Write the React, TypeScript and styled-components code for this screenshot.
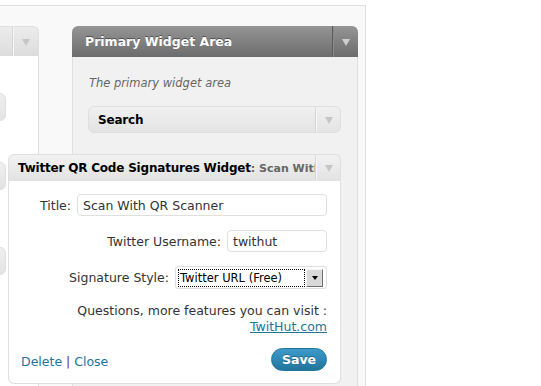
import React from 'react';
import styled, { createGlobalStyle } from 'styled-components';

const GlobalStyle = createGlobalStyle`
  * { box-sizing: border-box; }
  html, body {
    margin: 0;
    padding: 0;
    background: #fff;
  }
  body {
    font-family: 'DejaVu Sans', Verdana, sans-serif;
    font-size: 12.5px;
    color: #333;
    overflow: hidden;
  }
`;

const Frame = styled.div`
  display: flex;
  width: 366px;
  height: 381px;
  margin-top: 5px;
  padding-top: 20px;
  background: #f9f9f9;
  border-top: 1px solid #dfdfdf;
  border-right: 1px solid #dfdfdf;
  overflow: hidden;
`;

/* available widgets column, mostly scrolled off to the left */
const WidgetsPanel = styled.div`
  width: 39px;
  display: flex;
  flex-direction: column;
`;

const PanelHead = styled.div`
  height: 30px;
  display: flex;
  justify-content: flex-end;
  background: linear-gradient(#ececec, #dcdcdc);
  border-top: 1px solid #dfdfdf;
  border-right: 1px solid #dfdfdf;
  border-top-right-radius: 6px;
`;

const PanelBody = styled.div`
  flex: 1;
  background: #fff;
  border-right: 1px solid #dfdfdf;
  padding-top: 37px;
`;

interface StubProps {
  readonly top: number;
}

const Stub = styled.div<StubProps>`
  width: 20px;
  height: 28px;
  margin-left: -14px;
  margin-top: ${({ top }) => top}px;
  border: 1px solid #dfdfdf;
  border-radius: 6px;
  background: linear-gradient(#efefef, #e3e3e3);
`;

interface ToggleProps {
  readonly dark?: boolean;
  readonly w: number;
}

const Toggle = styled.div<ToggleProps>`
  width: ${({ w }) => w}px;
  flex: none;
  display: flex;
  align-items: center;
  justify-content: center;
  border-left: 1px solid ${({ dark }) => (dark ? '#5c5c5c' : '#f6f6f6')};
  box-shadow: ${({ dark }) => (dark ? 'inset 1px 0 0 #8a8a8a' : '-1px 0 0 #d6d6d6')};
  &::after {
    content: '';
    width: 0;
    height: 0;
    border-left: 4px solid transparent;
    border-right: 4px solid transparent;
    border-top: 7px solid ${({ dark }) => (dark ? '#cfcfcf' : '#c6c6c6')};
    margin-top: 1px;
  }
`;

const Sidebar = styled.div`
  width: 286px;
  margin-left: 33px;
  display: flex;
  flex-direction: column;
`;

const SidebarHead = styled.div`
  height: 31px;
  display: flex;
  align-items: stretch;
  background: linear-gradient(#959595, #6c6c6c);
  border-radius: 6px 6px 0 0;
  color: #fff;
`;

const SidebarTitle = styled.div`
  flex: 1;
  display: flex;
  align-items: center;
  padding-left: 13px;
  font-weight: bold;
  font-size: 12.5px;
  text-shadow: 0 -1px 0 #505050;
`;

const SidebarBody = styled.div`
  flex: 1;
  background: #f1f1f1;
  border-left: 1px solid #dfdfdf;
  border-right: 1px solid #dfdfdf;
  padding: 0 16px 0 15px;
`;

const Description = styled.p`
  margin: 18px 0 15px 1px;
  line-height: 16px;
  font-size: 11.5px;
  font-style: italic;
  color: #666;
`;

const SearchWidget = styled.div`
  height: 27px;
  display: flex;
  border: 1px solid #dfdfdf;
  border-radius: 6px;
  background: linear-gradient(#f0f0f0, #e4e4e4);
`;

const WidgetTitle = styled.div`
  flex: 1;
  display: flex;
  align-items: center;
  padding-left: 9px;
  font-weight: bold;
  font-size: 12px;
  letter-spacing: -0.2px;
  color: #000;
  white-space: nowrap;
  overflow: hidden;
`;

const InTitle = styled.span`
  color: #666;
  font-size: 11px;
  letter-spacing: 0;
`;

const OpenWidget = styled.div`
  margin: 21px 0 0 -80px;
`;

const OpenHead = styled.div`
  height: 27px;
  display: flex;
  background: linear-gradient(#f2f2f2, #e2e2e2);
  border: 1px solid #dfdfdf;
  border-bottom: none;
  border-radius: 6px 6px 0 0;
`;

const OpenBody = styled.div`
  background: #fff;
  border: 1px solid #dfdfdf;
  border-top: none;
  border-radius: 0 0 6px 6px;
  padding: 13px 13px 12px 12px;
`;

const FormRow = styled.div`
  display: flex;
  justify-content: flex-end;
  align-items: center;
  gap: 6px;
  margin-bottom: 14px;
`;

const Label = styled.span`
  color: #333;
`;

interface FieldProps {
  readonly w: number;
}

const Field = styled.div<FieldProps>`
  width: ${({ w }) => w}px;
  height: 22px;
  display: flex;
  align-items: center;
  padding: 0 5px;
  border: 1px solid #dfdfdf;
  border-radius: 4px;
  background: #fff;
  color: #333;
`;

const SelectBox = styled.div`
  width: 152px;
  height: 23px;
  display: flex;
  align-items: stretch;
  padding: 2px 3px 1px 2px;
  border: 1px solid #dfdfdf;
  border-radius: 3px;
  background: #fff;
`;

const SelectValue = styled.div`
  flex: 1;
  display: flex;
  align-items: center;
  padding-left: 1px;
  border: 1px dotted #000;
  font-size: 11.5px;
  color: #000;
  white-space: nowrap;
  overflow: hidden;
`;

const SelectButton = styled.div`
  width: 17px;
  flex: none;
  display: flex;
  align-items: center;
  justify-content: center;
  margin-left: 1px;
  background: #d9d9d9;
  border: 1px solid;
  border-color: #f4f4f4 #6f6f6f #6f6f6f #f4f4f4;
  &::after {
    content: '';
    width: 0;
    height: 0;
    border-left: 3.5px solid transparent;
    border-right: 3.5px solid transparent;
    border-top: 4px solid #000;
  }
`;

const Note = styled.p`
  margin: 13px 0 0;
  line-height: 16px;
  text-align: right;
  color: #333;
`;

const Link = styled.a`
  color: #21759b;
  text-decoration: underline;
`;

const Footer = styled.div`
  display: flex;
  justify-content: space-between;
  align-items: flex-end;
  margin-top: 13px;
`;

const Actions = styled.div`
  line-height: 16px;
  padding-bottom: 1px;
  color: #21759b;
`;

const Sep = styled.span`
  color: #6b3064;
`;

const SaveButton = styled.button`
  width: 56px;
  height: 23px;
  border: 1px solid #21759b;
  border-radius: 12px;
  background: linear-gradient(#3d9acb, #21759b);
  color: #fff;
  font-family: inherit;
  font-size: 12.5px;
  font-weight: bold;
  padding: 0;
  text-shadow: 0 -1px 0 rgba(0, 0, 0, 0.3);
`;

const App: React.FunctionComponent = (): React.ReactElement => (
  <>
    <GlobalStyle />
    <Frame>
      <WidgetsPanel>
        <PanelHead>
          <Toggle w={25} />
        </PanelHead>
        <PanelBody>
          <Stub top={0} />
          <Stub top={41} />
          <Stub top={57} />
        </PanelBody>
      </WidgetsPanel>
      <Sidebar>
        <SidebarHead>
          <SidebarTitle>Primary Widget Area</SidebarTitle>
          <Toggle dark w={26} />
        </SidebarHead>
        <SidebarBody>
          <Description>The primary widget area</Description>
          <SearchWidget>
            <WidgetTitle>Search</WidgetTitle>
            <Toggle w={24} />
          </SearchWidget>
          <OpenWidget>
            <OpenHead>
              <WidgetTitle>
                Twitter QR Code Signatures Widget<InTitle>: Scan With QR Scanner</InTitle>
              </WidgetTitle>
              <Toggle w={24} />
            </OpenHead>
            <OpenBody>
              <FormRow>
                <Label>Title:</Label>
                <Field w={250}>Scan With QR Scanner</Field>
              </FormRow>
              <FormRow>
                <Label>Twitter Username:</Label>
                <Field w={100}>twithut</Field>
              </FormRow>
              <FormRow>
                <Label>Signature Style:</Label>
                <SelectBox>
                  <SelectValue>Twitter URL (Free)</SelectValue>
                  <SelectButton />
                </SelectBox>
              </FormRow>
              <Note>
                Questions, more features you can visit :
                <br />
                <Link href="#">TwitHut.com</Link>
              </Note>
              <Footer>
                <Actions>
                  Delete <Sep>|</Sep> Close
                </Actions>
                <SaveButton>Save</SaveButton>
              </Footer>
            </OpenBody>
          </OpenWidget>
        </SidebarBody>
      </Sidebar>
    </Frame>
  </>
);

export default App;
